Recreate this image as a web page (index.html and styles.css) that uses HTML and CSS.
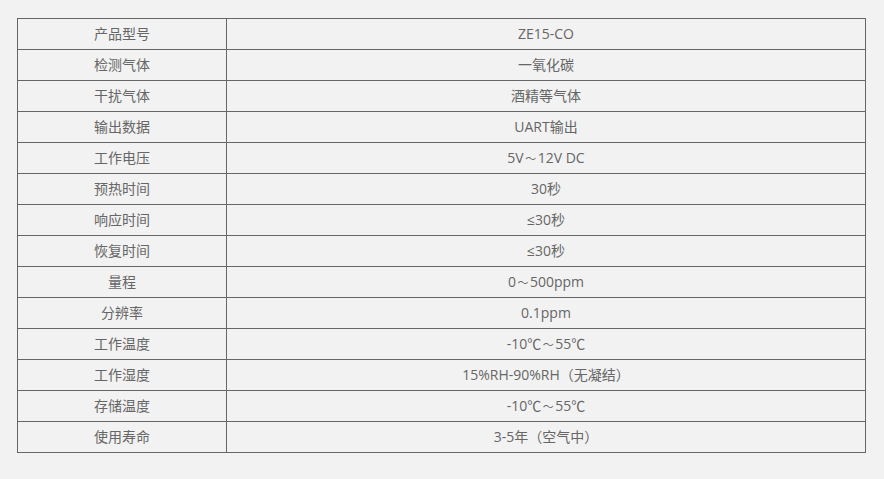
FILE: index.html
```html
<!DOCTYPE html>
<html lang="zh">
<head>
<meta charset="utf-8">
<link rel="stylesheet" href="styles.css">
</head>
<body>
<table class="spec">
<colgroup><col class="c1"><col class="c2"></colgroup>
<tbody>
<tr><td>产品型号</td><td>ZE15-CO</td></tr>
<tr><td>检测气体</td><td>一氧化碳</td></tr>
<tr><td>干扰气体</td><td>酒精等气体</td></tr>
<tr><td>输出数据</td><td>UART输出</td></tr>
<tr><td>工作电压</td><td>5V<span class="wave">～</span>12V DC</td></tr>
<tr><td>预热时间</td><td>30秒</td></tr>
<tr><td>响应时间</td><td>≤30秒</td></tr>
<tr><td>恢复时间</td><td>≤30秒</td></tr>
<tr><td>量程</td><td>0<span class="wave">～</span>500ppm</td></tr>
<tr><td>分辨率</td><td>0.1ppm</td></tr>
<tr><td>工作温度</td><td>-10℃<span class="wave">～</span>55℃</td></tr>
<tr><td>工作湿度</td><td>15%RH-90%RH（无凝结）</td></tr>
<tr><td>存储温度</td><td>-10℃<span class="wave">～</span>55℃</td></tr>
<tr><td>使用寿命</td><td>3-5年（空气中）</td></tr>
</tbody>
</table>
</body>
</html>
```
FILE: styles.css
```css
html, body {
  margin: 0;
  background: #f2f2f2;
}
body {
  padding: 18px 17px;
  font-family: "Open Sans", "Noto Sans CJK SC", sans-serif;
  font-size: 14px;
  color: #666;
}
.spec {
  border-collapse: collapse;
  width: 849px;
  table-layout: fixed;
}
.c1 { width: 209px; }
.spec td {
  border: 1px solid #666;
  height: 30px;
  padding: 0;
  text-align: center;
  vertical-align: middle;
  line-height: 18px;
}
.wave {
  display: inline-block;
  width: 14px;
  font-size: 11px;
  text-align: center;
  vertical-align: baseline;
}
```
